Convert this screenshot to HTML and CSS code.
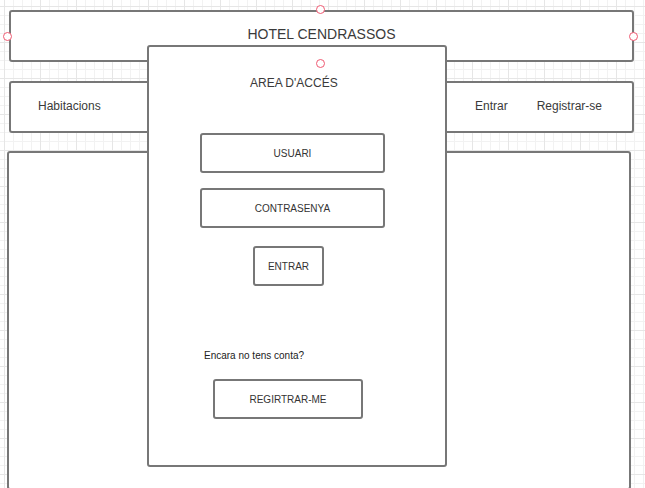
FILE: index.html
```html
<!DOCTYPE html>
<html lang="ca">

<head>
    <meta charset="UTF-8">
    <meta name="viewport" content="width=device-width, initial-scale=1.0">
    <title>Hotel Cendrassos</title>
    <link rel="stylesheet" href="styles.css">
</head>

<body>
    <div class="canvas">
        <header class="box header">
            <span class="title">HOTEL CENDRASSOS</span>
        </header>

        <nav class="box nav">
            <a class="nav-link">Habitacions</a>
            <div class="nav-right">
                <a class="nav-link">Entrar</a>
                <a class="nav-link">Registrar-se</a>
            </div>
        </nav>

        <main class="box content"></main>

        <!-- login popup over the page -->
        <div class="modal">
            <h2 class="modal-title">AREA D'ACCÉS</h2>
            <div class="field field-user">USUARI</div>
            <div class="field field-pass">CONTRASENYA</div>
            <div class="field btn-enter">ENTRAR</div>
            <p class="hint">Encara no tens conta?</p>
            <div class="field btn-register">REGIRTRAR-ME</div>
        </div>

        <span class="handle h-left"></span>
        <span class="handle h-top"></span>
        <span class="handle h-right"></span>
        <span class="handle h-bottom"></span>
    </div>
</body>

</html>
```

FILE: styles.css
```css
* {
    box-sizing: border-box;
}

html, body {
    height: 100%;
}

body {
    margin: 0;
    padding: 0;
    font-family: "Liberation Sans", Arial, sans-serif;
    color: #3a3a3a;
    overflow: hidden;
    background-color: #fff;
    background-image:
        linear-gradient(to right, #e6e6e6 1px, transparent 1px),
        linear-gradient(to bottom, #e6e6e6 1px, transparent 1px),
        linear-gradient(to right, #f2f2f2 1px, transparent 1px),
        linear-gradient(to bottom, #f2f2f2 1px, transparent 1px);
    background-size: 36px 36px, 36px 36px, 9px 9px, 9px 9px;
    background-position: 4px 6px;
}

.canvas {
    position: relative;
    padding-top: 10px;
    height: 100%;
}

.box {
    background: #fff;
    border: 2px solid #777;
    border-radius: 3px;
}

.header {
    margin-left: 9px;
    width: 625px;
    height: 52px;
    display: flex;
    justify-content: center;
    align-items: center;
    padding-bottom: 4px;
}

.title {
    font-size: 14px;
}

.nav {
    margin-top: 19px;
    margin-left: 9px;
    width: 625px;
    height: 52px;
    display: flex;
    align-items: center;
    padding: 0 30px 3px 27px;
}

.nav-link {
    font-size: 12px;
}

.nav-right {
    margin-left: auto;
    display: flex;
    gap: 29px;
}

.content {
    margin-top: 18px;
    margin-left: 7px;
    width: 624px;
    height: 339px;
}

.modal {
    position: absolute;
    left: 147px;
    top: 45px;
    width: 300px;
    height: 422px;
    background: #fff;
    border: 2px solid #777;
    border-radius: 3px;
    padding-top: 29px;
    display: flex;
    flex-direction: column;
    align-items: flex-start;
}

.modal-title {
    margin: 0 0 0 101px;
    font-size: 12px;
    font-weight: normal;
    line-height: 14px;
}

.field {
    height: 40px;
    border: 2px solid #777;
    border-radius: 3px;
    display: flex;
    justify-content: center;
    align-items: center;
    font-size: 10px;
    color: #333;
}

.field-user {
    margin: 43px 0 0 51px;
    width: 185px;
}

.field-pass {
    margin: 15px 0 0 51px;
    width: 185px;
}

.btn-enter {
    margin: 18px 0 0 104px;
    width: 71px;
}

.hint {
    margin: 64px 0 0 55px;
    font-size: 10px;
    line-height: 12px;
    color: #222;
}

.btn-register {
    margin: 17px 0 0 64px;
    width: 150px;
}

.handle {
    position: absolute;
    width: 9px;
    height: 9px;
    border: 1px solid #ef5a72;
    border-radius: 50%;
    background: #fff;
}

.h-left {
    left: 3px;
    top: 32px;
}

.h-top {
    left: 316px;
    top: 5px;
}

.h-right {
    left: 629px;
    top: 32px;
}

.h-bottom {
    left: 316px;
    top: 59px;
}
```
